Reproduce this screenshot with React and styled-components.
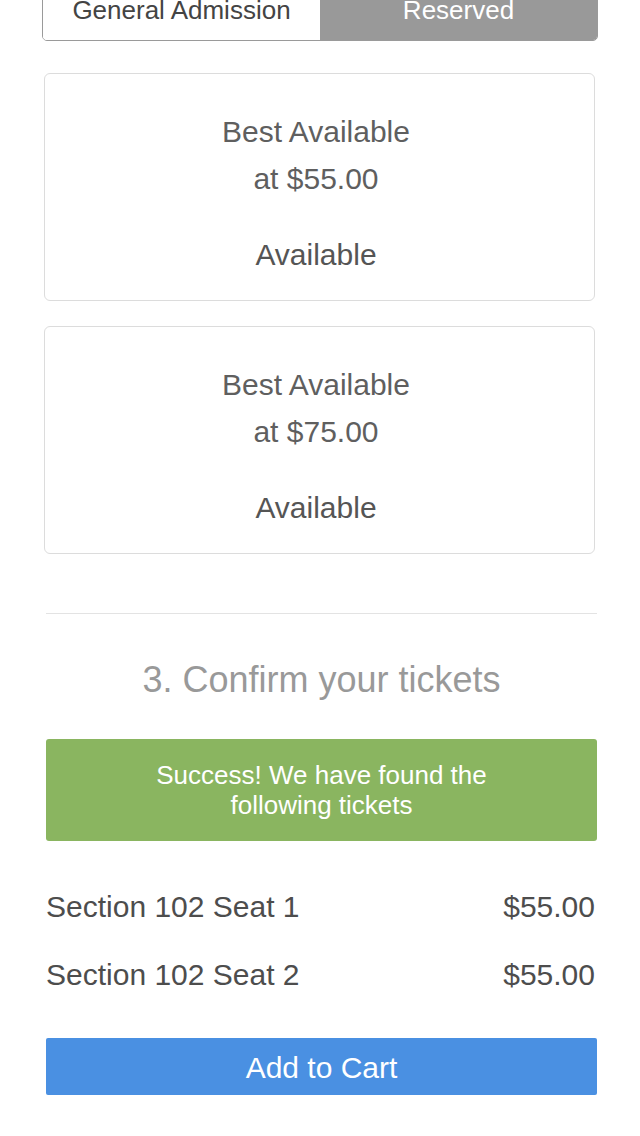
import React from "react";
import styled, { createGlobalStyle } from "styled-components";

const GlobalStyle = createGlobalStyle`
  * {
    box-sizing: border-box;
  }
  body {
    margin: 0;
    background: #fff;
    font-family: "Liberation Sans", Arial, sans-serif;
    overflow: hidden;
  }
`;

const Page = styled.div`
  padding: 0 42px;
  width: 640px;
  height: 1136px;
`;

const Tabs = styled.div`
  display: flex;
  margin-top: -20px;
  height: 61px;
  border: 1.5px solid #9a9a9a;
  border-radius: 0 0 5px 5px;
  overflow: hidden;
`;

const Tab = styled.div`
  flex: 1;
  text-align: center;
  font-size: 26px;
  line-height: 30px;
  padding-top: 14px;
  color: ${(p) => (p.active ? "#fff" : "#444")};
  background: ${(p) => (p.active ? "#999" : "#fff")};
`;

const Card = styled.div`
  margin: 32px 3px 0 2px;
  height: 228px;
  padding: 41px 7px 0 0;
  border: 1px solid #dcdcdc;
  border-radius: 6px;
  text-align: center;
  color: #5f5f5f;
  font-size: 30px;
  line-height: 34px;

  & + & {
    margin-top: 25px;
  }
`;

const Price = styled.div`
  margin-top: 13px;
`;

const Status = styled.div`
  margin-top: 42px;
  color: #555;
`;

const Section = styled.div`
  margin: 0 1px 0 4px;
`;

const Divider = styled.hr`
  margin: 59px 0 0;
  border: none;
  border-top: 1px solid #e3e3e3;
`;

const Heading = styled.h2`
  margin: 44px 0 0;
  text-align: center;
  font-weight: normal;
  font-size: 36px;
  line-height: 44px;
  color: #999;
`;

const Alert = styled.div`
  margin-top: 37px;
  padding: 21px 80px;
  background: #8ab560;
  border-radius: 3px;
  color: #fff;
  text-align: center;
  font-size: 26px;
  line-height: 30px;
`;

const Tickets = styled.div`
  margin-top: 32px;
`;

const TicketRow = styled.div`
  display: flex;
  justify-content: space-between;
  align-items: center;
  height: 68px;
  padding-right: 2px;
  font-size: 30px;
  color: #4d4d4d;
`;

const CartButton = styled.button`
  display: block;
  width: 100%;
  margin-top: 29px;
  height: 57px;
  border: none;
  border-radius: 2px;
  background: #4a90e2;
  color: #fff;
  font-family: "Liberation Sans", Arial, sans-serif;
  font-size: 30px;
  padding: 3px 0 0;
`;

const options = [
  { label: "Best Available", price: "$55.00" },
  { label: "Best Available", price: "$75.00" },
];

const tickets = [
  { seat: "Section 102 Seat 1", price: "$55.00" },
  { seat: "Section 102 Seat 2", price: "$55.00" },
];

const App = () => {
  return (
    <>
      <GlobalStyle />
      <Page>
        <Tabs>
          <Tab>General Admission</Tab>
          <Tab active>Reserved</Tab>
        </Tabs>
        {options.map((o, i) => (
          <Card key={i}>
            <div>{o.label}</div>
            <Price>at {o.price}</Price>
            <Status>Available</Status>
          </Card>
        ))}
        <Section>
          <Divider />
          <Heading>3. Confirm your tickets</Heading>
          <Alert>Success! We have found the following tickets</Alert>
          <Tickets>
            {tickets.map((t) => (
              <TicketRow key={t.seat}>
                <span>{t.seat}</span>
                <span>{t.price}</span>
              </TicketRow>
            ))}
          </Tickets>
          <CartButton>Add to Cart</CartButton>
        </Section>
      </Page>
    </>
  );
};

export default App;
